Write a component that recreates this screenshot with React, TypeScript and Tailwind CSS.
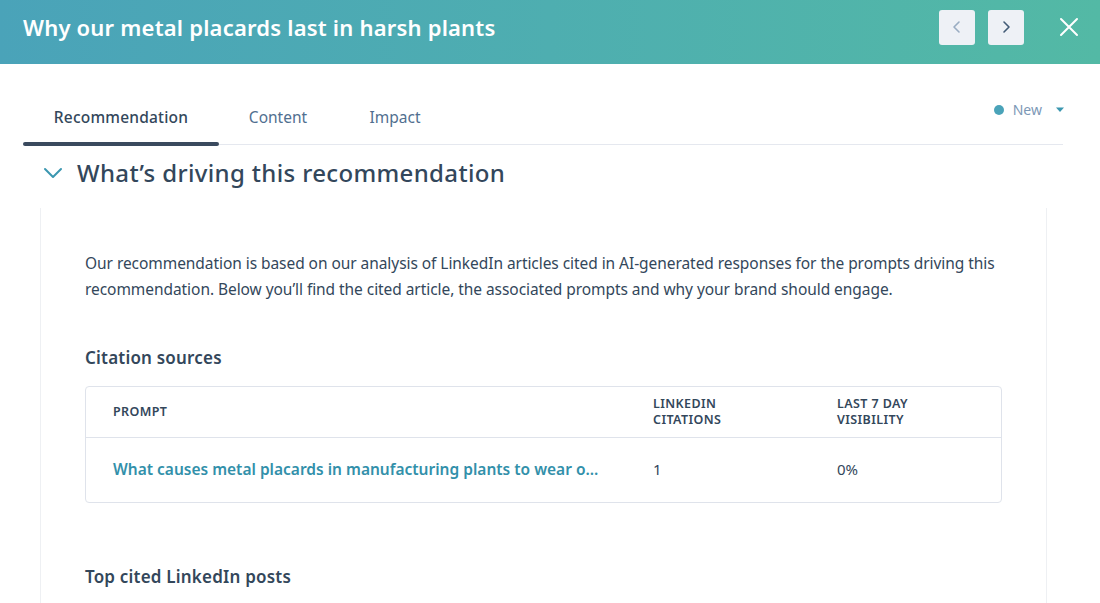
import React from "react";

const font = { fontFamily: '"Noto Sans", "Open Sans", sans-serif' };

function ChevronLeft() {
  return (
    <svg width="14" height="16" viewBox="0 0 14 16" fill="none">
      <path d="M9 3 L4 8 L9 13" stroke="#99acc2" strokeWidth="1.6" strokeLinecap="round" strokeLinejoin="round" />
    </svg>
  );
}

function ChevronRight() {
  return (
    <svg width="14" height="16" viewBox="0 0 14 16" fill="none">
      <path d="M5 3 L10 8 L5 13" stroke="#425b76" strokeWidth="1.6" strokeLinecap="round" strokeLinejoin="round" />
    </svg>
  );
}

function CloseIcon() {
  return (
    <svg width="20" height="20" viewBox="0 0 20 20" fill="none">
      <path d="M2 2 L18 18 M18 2 L2 18" stroke="#ffffff" strokeWidth="2" strokeLinecap="round" />
    </svg>
  );
}

export default function App() {
  return (
    <div className="w-[1100px] h-[603px] overflow-hidden bg-white text-[#33475b] flex flex-col" style={font}>
      {/* header bar */}
      <div className="h-[64px] shrink-0 flex items-center bg-gradient-to-r from-[#4aa3b9] via-[#4eaeb0] to-[#53b9a5] pl-[23px] pr-[20px] pb-[10px]">
        <h1 className="text-[22px] font-semibold text-white tracking-[0.2px] flex-1">Why our metal placards last in harsh plants</h1>
        <div className="flex items-center gap-[13px]">
          <button className="w-[36px] h-[35px] rounded-[3px] bg-[#eef1f6] flex items-center justify-center">
            <ChevronLeft />
          </button>
          <button className="w-[36px] h-[35px] rounded-[3px] bg-[#eef1f6] flex items-center justify-center">
            <ChevronRight />
          </button>
          <button className="ml-[21px] w-[22px] h-[22px] flex items-center justify-center">
            <CloseIcon />
          </button>
        </div>
      </div>

      {/* tabs */}
      <div className="px-[23px] pr-[37px] shrink-0">
        <div className="flex items-end border-b border-[#e5e8ef] h-[81px] relative">
          <div className="w-[196px] h-full flex flex-col items-center justify-end relative">
            <span className="text-[15.5px] font-medium text-[#33475b] tracking-[0.2px] mb-[15px]">Recommendation</span>
            <div className="absolute left-0 right-0 bottom-[-2px] h-[4px] rounded-full bg-[#3a4a5e]" />
          </div>
          <div className="w-[118px] h-full flex flex-col items-center justify-end">
            <span className="text-[15.5px] text-[#516f90] mb-[15px]">Content</span>
          </div>
          <div className="w-[116px] h-full flex flex-col items-center justify-end">
            <span className="text-[15.5px] text-[#516f90] mb-[15px]">Impact</span>
          </div>
          <div className="flex-1" />
          <div className="self-start mt-[35px] mr-[-2px] flex items-center">
            <span className="w-[10px] h-[10px] rounded-full bg-[#4aa3b9]" />
            <span className="ml-[9px] text-[14px] text-[#7c98b6]">New</span>
            <svg className="ml-[13px]" width="10" height="6" viewBox="0 0 10 6">
              <path d="M1 0.5 L9 0.5 L5 5 Z" fill="#3b97b0" />
            </svg>
          </div>
        </div>

        {/* section heading */}
        <div className="flex items-center h-[56px] pl-[20px]">
          <svg width="20" height="12" viewBox="0 0 20 12" fill="none">
            <path d="M2 2 L10 10 L18 2" stroke="#3b97b0" strokeWidth="2" strokeLinecap="round" strokeLinejoin="round" />
          </svg>
          <h2 className="ml-[14px] text-[24px] font-medium text-[#33475b] tracking-[0.35px]">What’s driving this recommendation</h2>
        </div>
      </div>

      {/* panel */}
      <div className="flex-1 mx-[40px] mr-[53px] mt-[7px] border-x border-[#eef0f3] pl-[44px] pr-[44px] pt-[42px]">
        <p className="text-[15.5px] leading-[26px] tracking-[-0.06px] text-[#33475b]">
          Our recommendation is based on our analysis of LinkedIn articles cited in AI-generated responses for the prompts driving this
          recommendation. Below you’ll find the cited article, the associated prompts and why your brand should engage.
        </p>

        <h3 className="mt-[43px] text-[17px] font-semibold text-[#33475b] tracking-[0.2px]">Citation sources</h3>

        <div className="mt-[15px] border border-[#dfe3eb] rounded-[4px] overflow-hidden">
          <div className="grid grid-cols-[567px_184px_1fr] h-[51px] items-center border-b border-[#dfe3eb] text-[12.5px] font-semibold uppercase leading-[16px] text-[#33475b] tracking-[0.4px]">
            <div className="pl-[27px]">Prompt</div>
            <div>LinkedIn<br />Citations</div>
            <div>Last 7 day<br />visibility</div>
          </div>
          <div className="grid grid-cols-[567px_184px_1fr] h-[64px] items-center text-[15px]">
            <div className="pl-[27px] text-[15.5px] font-semibold text-[#3290aa] whitespace-nowrap">What causes metal placards in manufacturing plants to wear o...</div>
            <div className="text-[#33475b]">1</div>
            <div className="text-[#33475b]">0%</div>
          </div>
        </div>

        <h3 className="mt-[61px] text-[17px] font-semibold text-[#33475b] tracking-[0.2px]">Top cited LinkedIn posts</h3>
      </div>
    </div>
  );
}
